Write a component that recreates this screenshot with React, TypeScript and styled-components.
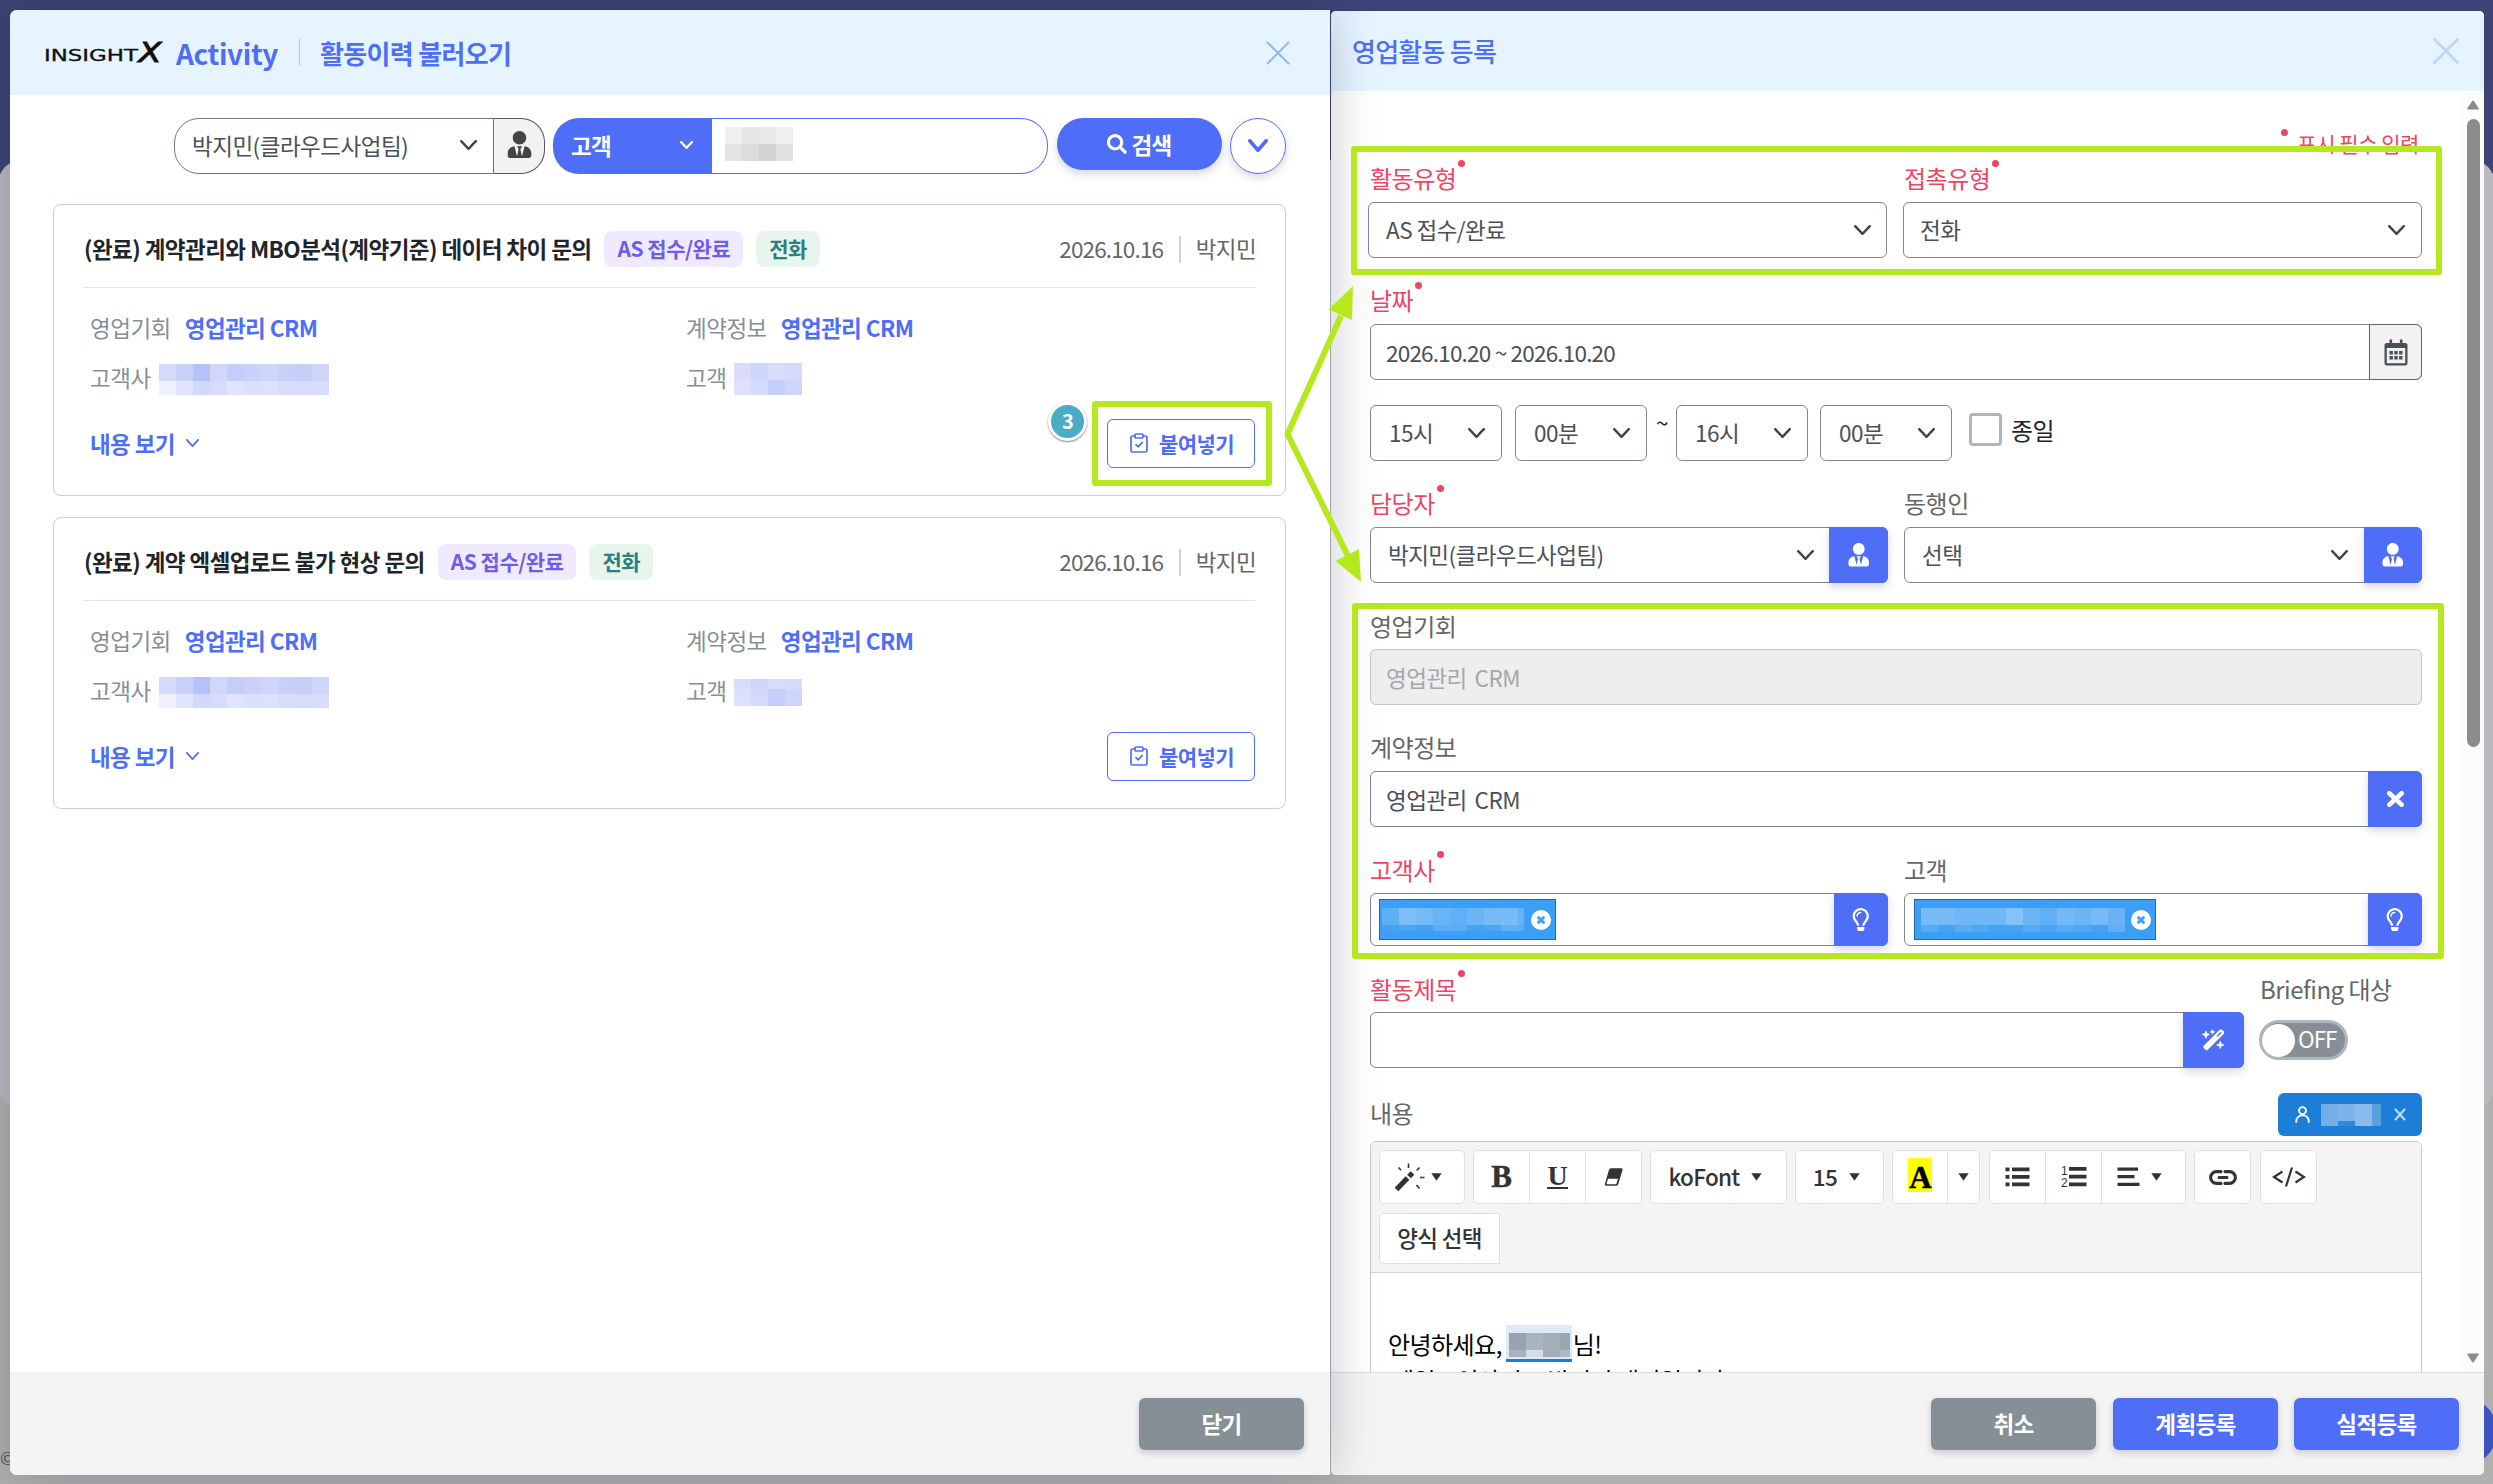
import React from "react";
import styled, { createGlobalStyle, css } from "styled-components";
import { FaSearch, FaUserTie, FaRegLightbulb } from "react-icons/fa";
import { FaWandMagicSparkles } from "react-icons/fa6";

const BLUE = "#4f6ef7";
const LIME = "#b5e91e";
const LINE = "#7f8893";
const RED = "#ef4563";

const GlobalStyle = createGlobalStyle`
  * { box-sizing: border-box; }
  body {
    margin: 0;
    font-family: "Noto Sans CJK KR", "Noto Sans", sans-serif;
    font-size: 22.5px;
    letter-spacing: -0.6px;
    color: #212529;
  }
`;

/* ---------- page and windows ---------- */

const Page = styled.div`
  position: relative;
  width: 2493px;
  height: 1484px;
  overflow: hidden;
  background: #adadaf;
`;

const Backdrop = styled.div`
  position: absolute;
  inset: 0;
  background: linear-gradient(#3d4475 0 200px, #b0b0b0 200px);
`;

const BackdropSheet = styled.div`
  position: absolute;
  left: -2px;
  right: -2px;
  top: 160px;
  height: 950px;
  border-radius: 24px;
  background: #bab9be;
`;

const Copyright = styled.div`
  position: absolute;
  left: 0;
  top: 1444px;
  font-size: 18px;
  line-height: 26px;
  color: #55555a;
`;

const FloatingButton = styled.div`
  position: absolute;
  left: 2428px;
  top: 1397px;
  width: 69px;
  height: 69px;
  border-radius: 50%;
  background: #3c52c0;
`;

const Windows = styled.main`
  position: relative;
  display: flex;
  align-items: stretch;
  gap: 1px;
  height: 100%;
  padding: 10px 9px 9px 10px;
`;

const Window = styled.section<{ $front?: boolean }>`
  display: flex;
  flex-direction: column;
  background: #fff;
  overflow: hidden;
  ${(p) =>
    p.$front
      ? css`
          position: relative;
          z-index: 1;
          width: 1320px;
          border-radius: 7px 0 0 7px;
          box-shadow: 0 0 48px rgba(20, 25, 60, 0.24);
        `
      : css`
          flex: 1;
          margin-top: 1px;
          border-radius: 5px;
        `}
`;

const WindowHeader = styled.header<{ $h: number; $pad: string }>`
  flex: none;
  display: flex;
  align-items: center;
  height: ${(p) => p.$h}px;
  padding: ${(p) => p.$pad};
  background: #e5f4ff;
`;

const WindowTitle = styled.h1<{ $strong?: boolean }>`
  margin: 0;
  font-size: 26px;
  font-weight: ${(p) => (p.$strong ? 700 : 500)};
  line-height: 40px;
  letter-spacing: ${(p) => (p.$strong ? -0.65 : -0.75)}px;
  color: ${BLUE};
`;

const Product = styled.span`
  margin: 0 21px 0 13px;
  font-size: 28px;
  font-weight: 700;
  line-height: 40px;
  letter-spacing: -0.4px;
  color: ${BLUE};
`;

const HeaderRule = styled.span`
  width: 1px;
  height: 27px;
  margin-right: 20px;
  background: #a5cdf0;
`;

const CloseButton = styled.span`
  display: flex;
  margin-left: auto;
`;

const WindowFooter = styled.footer<{ $line?: boolean }>`
  flex: none;
  display: flex;
  justify-content: flex-end;
  align-items: center;
  gap: 16px;
  height: 103px;
  padding: 0 25px 1px 0;
  background: #f4f4f4;
  border-top: 1px solid ${(p) => (p.$line ? "#dcdcdc" : "#f4f4f4")};
`;

const FooterButton = styled.button<{ $muted?: boolean }>`
  width: 165px;
  height: 52px;
  margin-right: ${(p) => (p.$muted ? 1 : 0)}px;
  padding: 0;
  border: 0;
  border-radius: 6px;
  background: ${(p) => (p.$muted ? "#868e96" : BLUE)};
  box-shadow: 0 3px 7px rgba(50, 50, 93, 0.22);
  color: #fff;
  font: 700 22.5px / 49px "Noto Sans CJK KR", sans-serif;
  letter-spacing: -0.6px;
`;

/* ---------- search row ---------- */

const SearchRow = styled.div`
  display: flex;
  justify-content: flex-end;
  align-items: flex-start;
  height: 56px;
  margin: 23px 44px 30px 0;
`;

const OwnerPill = styled.div`
  display: flex;
  align-items: center;
  justify-content: space-between;
  width: 320px;
  height: 56px;
  padding: 0 16px 2px 17px;
  border: 1px solid #6f7780;
  border-radius: 25px 0 0 25px;
  color: #495057;
  line-height: 50px;
  letter-spacing: -0.5px;
`;

const OwnerIcon = styled.div`
  display: flex;
  align-items: center;
  justify-content: center;
  width: 51px;
  height: 56px;
  margin: 0 8px 0 0;
  padding-bottom: 4px;
  border: 1px solid #555;
  border-left: 0;
  border-radius: 0 24px 24px 0;
  background: #f2f2f2;
  color: #444;
  font-size: 27px;
`;

const FieldPick = styled.div`
  display: flex;
  align-items: center;
  justify-content: space-between;
  width: 159px;
  height: 56px;
  padding: 0 19px 2px 18px;
  border-radius: 26px 0 0 26px;
  background: ${BLUE};
  color: #fff;
  font-weight: 700;
  line-height: 50px;
`;

const KeywordBox = styled.div`
  display: flex;
  align-items: center;
  width: 336px;
  height: 56px;
  margin-right: 9px;
  padding: 0 0 4px 13px;
  border: 1.5px solid ${BLUE};
  border-left: 0;
  border-radius: 0 27px 27px 0;
`;

const SearchButton = styled.div`
  display: flex;
  align-items: center;
  justify-content: center;
  gap: 4px;
  width: 165px;
  height: 52px;
  margin-right: 8px;
  border-radius: 26px;
  background: ${BLUE};
  box-shadow: 0 4px 8px rgba(50, 50, 93, 0.2);
  color: #fff;
  font-size: 22.5px;
  font-weight: 700;
  line-height: 49px;
`;

const MoreButton = styled.div`
  display: flex;
  align-items: center;
  justify-content: center;
  width: 56px;
  height: 56px;
  padding-bottom: 1px;
  border: 1.5px solid ${BLUE};
  border-radius: 50%;
  box-shadow: 0 4px 8px rgba(50, 50, 93, 0.18);
`;

/* ---------- history cards ---------- */

const CardList = styled.div`
  flex: 1;
  display: flex;
  flex-direction: column;
  gap: 21px;
  padding: 0 44px 0 43px;
`;

const Card = styled.article`
  height: 292px;
  padding: 0 29px;
  border: 1px solid #c3d0e0;
  border-radius: 8px;
`;

const CardHead = styled.div`
  display: flex;
  align-items: center;
  height: 83px;
  padding: 5px 0 0 1px;
  border-bottom: 1px solid #dde3ea;
`;

const CardTitle = styled.h2`
  margin: 0 13px 1px 0;
  font-size: 22.5px;
  font-weight: 700;
  line-height: 34px;
  letter-spacing: -0.56px;
  color: #212529;
`;

const Tag = styled.span<{ $green?: boolean }>`
  height: 36px;
  margin-right: 13px;
  padding: 0 13px;
  border-radius: 8px;
  background: ${(p) => (p.$green ? "#e8f5ec" : "#efeafd")};
  color: ${(p) => (p.$green ? "#2b7f83" : "#6f5ce8")};
  font-size: 21px;
  font-weight: 700;
  line-height: 35px;
  letter-spacing: -0.5px;
`;

const CardMeta = styled.div`
  display: flex;
  align-items: center;
  margin-left: auto;
  line-height: 30px;
  padding-bottom: 1px;
  color: #666;
`;

const Digits = styled.span`
  letter-spacing: -0.85px;
`;

const MetaRule = styled.span`
  width: 1.5px;
  height: 27px;
  margin: 3px 15px 0 16px;
  background: #cdd3dc;
`;

const Facts = styled.div`
  display: grid;
  grid-template-columns: 596px 1fr;
  grid-auto-rows: 50px;
  align-items: center;
  padding: 16px 0 0 7px;
`;

const Fact = styled.div<{ $gap: number }>`
  display: flex;
  align-items: center;
  gap: ${(p) => p.$gap}px;
  line-height: 44px;
  color: #868e96;
`;

const FactLabel = styled.span`
  padding-bottom: 4px;
  letter-spacing: -0.5px;
`;

const FactLink = styled.b`
  padding-bottom: 4px;
  font-weight: 700;
  letter-spacing: -0.6px;
  color: ${BLUE};
`;

const CardActions = styled.div`
  display: flex;
  align-items: center;
  justify-content: space-between;
  height: 49px;
  margin: 15px 1px 0 7px;
`;

const ShowContent = styled.span`
  display: flex;
  align-items: center;
  gap: 11px;
  padding-bottom: 1px;
  font-weight: 700;
  color: ${BLUE};
`;

const PasteButton = styled.span`
  display: flex;
  align-items: center;
  gap: 11px;
  width: 148px;
  height: 49px;
  padding: 0 0 1px 22px;
  border: 1.5px solid ${BLUE};
  border-radius: 6px;
  font-size: 21px;
  font-weight: 700;
  color: ${BLUE};
`;

/* ---------- mosaics over private values ---------- */

const MosaicGrid = styled.span<{ $cols: string; $rows: string }>`
  display: inline-grid;
  flex: none;
  grid-template-columns: ${(p) => p.$cols};
  grid-template-rows: ${(p) => p.$rows};
`;

const MosaicCell = styled.i<{ $c: string }>`
  background: ${(p) => p.$c};
`;

function Mosaic({ cols, rows, cells }: { cols: string; rows: string; cells: string }) {
  return (
    <MosaicGrid $cols={cols} $rows={rows}>
      {cells.split(" ").map((c, i) => (
        <MosaicCell key={i} $c={"#" + c} />
      ))}
    </MosaicGrid>
  );
}

/* ---------- form ---------- */

const FormScroll = styled.div`
  flex: 1;
  display: flex;
  min-height: 0;
`;

const FormColumn = styled.div`
  flex: 1;
  padding: 0 40px 0 39px;
  overflow: hidden;
`;

const ScrollTrack = styled.div`
  display: flex;
  flex-direction: column;
  align-items: center;
  width: 22px;
  padding: 9px 0 9px;
  background: #fcfcfc;
`;

const ScrollThumb = styled.div`
  width: 13px;
  height: 628px;
  margin: 9px 0 auto;
  border-radius: 7px;
  background: #8b8b8b;
`;

const RequiredNote = styled.p`
  display: flex;
  justify-content: flex-end;
  height: 71px;
  margin: 0;
  padding: 36px 3px 0 0;
  font-size: 21px;
  line-height: 32px;
  letter-spacing: -0.45px;
  color: ${RED};
`;

const Dot = styled.i<{ $gap?: number }>`
  width: 7px;
  height: 7px;
  margin: 2px ${(p) => p.$gap ?? 0}px 0 2px;
  border-radius: 50%;
  background: ${RED};
`;

const FormRow = styled.div<{ $wide?: boolean; $top?: number }>`
  display: flex;
  gap: 16px;
  margin-top: ${(p) => p.$top ?? 26}px;
  margin-left: ${(p) => (p.$wide ? -2 : 0)}px;
`;

const FieldBox = styled.div<{ $w?: number }>`
  ${(p) => (p.$w ? `width: ${p.$w}px;` : "flex: 1;")}
`;

const FieldLabel = styled.div<{ $required?: boolean; $pad?: number; $low?: boolean }>`
  display: flex;
  height: 40px;
  padding-left: ${(p) => p.$pad ?? 0}px;
  font-size: 24px;
  line-height: ${(p) => (p.$low ? 33 : 32)}px;
  letter-spacing: -0.5px;
  color: ${(p) => (p.$required ? RED : "#666")};
`;

const LabelDot = styled(Dot)`
  margin: -2px 0 0 2px;
`;

const Control = styled.div<{ $h?: number; $disabled?: boolean }>`
  display: flex;
  height: ${(p) => p.$h ?? 56}px;
  border: 1px solid ${(p) => (p.$disabled ? "#c3c6ca" : LINE)};
  border-radius: 6px;
  background: ${(p) => (p.$disabled ? "#eee" : "transparent")};
  color: ${(p) => (p.$disabled ? "#a3a6aa" : "#495057")};
`;

const ControlValue = styled.span<{ $pad?: number; $ws?: number; $tight?: boolean; $low?: boolean }>`
  flex: 1;
  padding-left: ${(p) => p.$pad ?? 15}px;
  line-height: ${(p) => (p.$low ? 54 : 52)}px;
  letter-spacing: ${(p) => (p.$tight ? -0.8 : -0.55)}px;
  word-spacing: ${(p) => p.$ws ?? 0}px;
  white-space: nowrap;
`;

const ChevronSlot = styled.span<{ $end?: number }>`
  display: flex;
  align-items: center;
  padding-right: ${(p) => p.$end ?? 16}px;
`;

const SideButton = styled.span<{ $w: number; $gray?: boolean }>`
  flex: none;
  display: flex;
  align-items: center;
  justify-content: center;
  width: ${(p) => p.$w}px;
  margin: -1px -1px -1px 0;
  border-radius: 0 6px 6px 0;
  font-size: 23.5px;
  ${(p) =>
    p.$gray
      ? css`
          border: 1px solid #666;
          background: #f2f2f2;
          color: #495057;
        `
      : css`
          background: ${BLUE};
          box-shadow: 0 4px 8px rgba(50, 50, 93, 0.18);
          color: #fff;
        `}
`;

const TimeRow = styled.div`
  display: flex;
  margin-top: 25px;
  height: 56px;
`;

const TimeSelect = styled(Control)<{ $after: number }>`
  width: 132px;
  margin-right: ${(p) => p.$after}px;
`;

const Tilde = styled.span`
  width: 20px;
  margin-left: -20px;
  line-height: 34px;
`;

const Checkbox = styled.span`
  width: 33px;
  height: 33px;
  margin: 8px 9px 0 0;
  border: 3px solid #adb5bd;
  border-radius: 4px;
`;

const CheckboxText = styled.span`
  font-size: 24px;
  line-height: 50px;
`;

const Chip = styled.span<{ $w: number; $pad: number; $left?: number }>`
  display: flex;
  align-items: center;
  justify-content: space-between;
  width: ${(p) => p.$w}px;
  height: 41px;
  margin: 5px auto 0 ${(p) => p.$left ?? 8}px;
  padding: 0 4px 0 ${(p) => p.$pad}px;
  border: 1px solid #2568a5;
  background: #3b9ff5;
`;

const Switch = styled.div`
  display: flex;
  align-items: center;
  width: 89px;
  height: 40px;
  margin: 8px 0 0 -1px;
  border: 3px solid #adb5bd;
  border-radius: 20px;
  background: #868e96;
  color: #fff;
  font-size: 22.5px;
  letter-spacing: -1px;
`;

const SwitchText = styled.span`
  padding-bottom: 4px;
  line-height: 30px;
`;

const Knob = styled.span`
  width: 33px;
  height: 33px;
  margin-right: 3px;
  border-radius: 50%;
  background: #fff;
`;

const ContentHead = styled.div`
  display: flex;
  justify-content: space-between;
  margin: 25px 0 5px;
  height: 43px;
  line-height: 40px;
  font-size: 24px;
  color: #666;
`;

const PersonChip = styled.span`
  display: flex;
  align-items: center;
  width: 144px;
  padding-left: 17px;
  border-radius: 6px;
  background: #1c7ed6;
`;

const ChipGap = styled.span<{ $w: number }>`
  width: ${(p) => p.$w}px;
`;

/* ---------- editor ---------- */

const Editor = styled.div`
  height: 300px;
  border: 1px solid #c6c8ca;
  border-radius: 6px 6px 0 0;
`;

const Toolbar = styled.div`
  display: flex;
  flex-wrap: wrap;
  align-content: flex-start;
  gap: 9px 8px;
  height: 131px;
  padding: 8px;
  border-radius: 5px 5px 0 0;
  background: #f4f4f4;
  border-bottom: 1px solid #d4d6d8;
`;

const ToolGroup = styled.div<{ $nudge?: boolean }>`
  display: flex;
  height: 54px;
  margin-left: ${(p) => (p.$nudge ? 1 : 0)}px;
  border: 1px solid #dae0e5;
  border-radius: 5px;
  background: #fff;
  overflow: hidden;
`;

const Tool = styled.span<{ $w: number; $gap?: number; $end?: number }>`
  display: flex;
  align-items: center;
  justify-content: center;
  gap: ${(p) => p.$gap ?? 6}px;
  width: ${(p) => p.$w}px;
  padding-right: ${(p) => p.$end ?? 0}px;
  color: #333;
  font-weight: 500;
  letter-spacing: -0.7px;
  & + & {
    border-left: 1px solid #dae0e5;
  }
`;

const ToolText = styled.span`
  padding-bottom: 3px;
`;

const SerifGlyph = styled.span<{ $under?: boolean; $mark?: boolean }>`
  font-family: "Liberation Serif", serif;
  font-weight: 700;
  letter-spacing: 0;
  font-size: 31px;
  line-height: ${(p) => (p.$mark ? 34 : 30)}px;
  -webkit-text-stroke: 0.5px currentColor;
  ${(p) =>
    p.$under &&
    css`
      font-size: 28px;
      line-height: 22px;
      border-bottom: 2px solid #333;
      -webkit-text-stroke: 0;
    `}
  ${(p) =>
    p.$mark &&
    css`
      margin-top: -5px;
      padding: 3px 0 0 1px;
      height: 34px;
      background: #ff0;
      color: #000;
    `}
`;

const FormPick = styled(ToolGroup)`
  height: 51px;
  border-radius: 5px 0 0 5px;
`;

const EditorText = styled.div`
  padding: 52px 17px 0;
  font-size: 24px;
  line-height: 37px;
  letter-spacing: -0.55px;
  color: #000;
  white-space: nowrap;
`;

const EditorLine = styled.div<{ $inset?: number }>`
  display: flex;
  padding-left: ${(p) => p.$inset ?? 0}px;
  & + & {
    margin-top: -1px;
  }
`;

const Mention = styled.span`
  display: flex;
  width: 66px;
  height: 37px;
  margin: 0 1px 0 4px;
  padding: 8px 0 0 3px;
  background: #dcebf7;
  border-bottom: 3px solid #1c7ed6;
`;

/* ---------- annotations drawn over the screen ---------- */

const Highlight = styled.div<{ $x: number; $y: number; $w: number; $h: number }>`
  position: absolute;
  z-index: 3;
  left: ${(p) => p.$x}px;
  top: ${(p) => p.$y}px;
  width: ${(p) => p.$w}px;
  height: ${(p) => p.$h}px;
  border: 6px solid ${LIME};
  border-radius: 3px;
`;

const StepBadge = styled.div`
  position: absolute;
  z-index: 3;
  left: 1048px;
  top: 402px;
  width: 39px;
  height: 39px;
  border: 3px solid #fff;
  border-radius: 50%;
  background: #4bacc6;
  box-shadow: 0 1px 2px rgba(0, 0, 0, 0.5);
  color: #fff;
  font-size: 20px;
  font-weight: 700;
  line-height: 31px;
  text-align: center;
`;

const ArrowLayer = styled.svg`
  position: absolute;
  z-index: 3;
  left: 1270px;
  top: 270px;
`;

/* ---------- drawn icons ---------- */

function Chevron({ w = 17, h = 10, stroke = 2.4, color = "#444" }: { w?: number; h?: number; stroke?: number; color?: string }) {
  const p = stroke / 2;
  return (
    <svg width={w} height={h} viewBox={`0 0 ${w} ${h}`} fill="none" stroke={color} strokeWidth={stroke} strokeLinecap="round" strokeLinejoin="round">
      <path d={`M${p} ${p} L${w / 2} ${h - p} L${w - p} ${p}`} />
    </svg>
  );
}

function Cross({ w, h, stroke, color }: { w: number; h: number; stroke: number; color: string }) {
  const p = Math.max(1.5, stroke / 2);
  return (
    <svg width={w} height={h} viewBox={`0 0 ${w} ${h}`} stroke={color} strokeWidth={stroke} strokeLinecap="round">
      <path d={`M${p} ${p} L${w - p} ${h - p} M${w - p} ${p} L${p} ${h - p}`} />
    </svg>
  );
}

const Caret = () => (
  <svg width="11" height="8" viewBox="0 0 11 8">
    <path d="M0.3 0.3h10.4L5.5 7.8z" fill="#333" />
  </svg>
);

const LogoBox = styled.svg`
  margin-left: -1px;
  margin-right: 1px;
  overflow: visible;
`;

const Logo = () => (
  <LogoBox width="118" height="30" viewBox="0 0 118 30">
    <text x="0" y="22.500" fontFamily="DejaVu Sans" fontSize="15" fill="#111" stroke="#111" strokeWidth="0.300" textLength="94" lengthAdjust="spacingAndGlyphs" letterSpacing="0">
      INSIGHT
    </text>
    <text x="94.500" y="23.500" fontFamily="DejaVu Sans" fontStyle="italic" fontSize="27" fill="#111" stroke="#111" strokeWidth="0.900" textLength="23" lengthAdjust="spacingAndGlyphs" letterSpacing="0">
      X
    </text>
  </LogoBox>
);

const ClipboardIcon = () => (
  <svg width="18" height="20" viewBox="0 0 18 20" fill="none" stroke={BLUE} strokeWidth="1.7" strokeLinejoin="round" strokeLinecap="round">
    <path d="M5 3H2.6A1.6 1.6 0 0 0 1 4.6v12.8A1.6 1.6 0 0 0 2.6 19h12.8a1.6 1.6 0 0 0 1.6-1.6V4.6A1.6 1.6 0 0 0 15.4 3H13" />
    <rect x="5" y="1" width="8" height="4" rx="1" />
    <path d="M6 11.6l2.3 2.2 4-4.4" />
  </svg>
);

const CalendarIcon = () => (
  <svg width="24" height="27" viewBox="0 0 24 27">
    <path d="M5.5 0.5h2.6V4H15.9V0.5h2.6V4h2.8A2.2 2.2 0 0 1 23.5 6.200V24.300A2.200 2.200 0 0 1 21.300 26.500H2.700A2.200 2.200 0 0 1 0.500 24.300V6.200A2.200 2.200 0 0 1 2.700 4H5.500zM2.800 9V24.200H21.200V9z" fill="#495057" fillRule="evenodd" />
    <path d="M5.500 12h3.400v3.400H5.500zM10.300 12h3.400v3.400h-3.400zM15.100 12h3.400v3.400h-3.400zM5.500 17h3.400v3.400H5.500zM10.300 17h3.400v3.400h-3.400zM15.100 17h3.400v3.400h-3.400z" fill="#495057" />
  </svg>
);

const RemoveIcon = () => (
  <svg width="20" height="20" viewBox="0 0 20 20">
    <circle cx="10" cy="10" r="10" fill="#fff" />
    <path d="M6.700 6.700l6.600 6.600M13.300 6.700l-6.600 6.600" stroke="#3b9ff5" strokeWidth="2.800" />
  </svg>
);

const PersonOutline = () => (
  <svg width="15" height="17" viewBox="0 0 15 17" fill="none" stroke="#fff" strokeWidth="1.900" strokeLinecap="round">
    <circle cx="7.500" cy="4.600" r="3.500" />
    <path d="M1.200 16c0-4.200 2.600-6.600 6.300-6.600s6.300 2.400 6.300 6.600" />
  </svg>
);

const WandIcon = () => (
  <svg width="31" height="29" viewBox="0 0 31 29">
    <g stroke="#333" fill="none">
      <path d="M2.500 26.500L13.500 15" strokeWidth="5.200" />
      <path d="M15 13.500L18.500 10" strokeWidth="5.200" />
      <path d="M14.500 0.500v4.500M4.500 4.500l2.600 2.800M25.500 4.500l-2.800 3M26 14.500h4.500M22.500 22l3 3.500" strokeWidth="1.600" />
    </g>
  </svg>
);

const EraserIcon = () => (
  <svg width="20" height="20" viewBox="0 0 20 20">
    <path d="M6.800 1.200h10.400a1.300 1.300 0 0 1 1.300 1.700l-4.300 14.400a2.200 2.200 0 0 1-2 1.500H2.200a1.300 1.300 0 0 1-1.300-1.700L5 2.700a2.200 2.200 0 0 1 1.800-1.500z" fill="#333" />
    <path d="M4 11.800h10l-1.600 5a.6.600 0 0 1-.6.400H3.100a.5.500 0 0 1-.5-.7z" fill="#fff" />
  </svg>
);

const BulletIcon = () => (
  <svg width="25" height="20" viewBox="0 0 25 20" fill="#333">
    <path d="M0.500 0.500h4v3.800h-4zM0.500 8h4v3.800h-4zM0.500 15.500h4v3.800h-4zM7 0.500h17.500v3.800H7zM7 8h17.500v3.800H7zM7 15.500h17.500v3.800H7z" />
  </svg>
);

const NumberIcon = () => (
  <svg width="26" height="22" viewBox="0 0 26 22" fill="#333">
    <text x="0" y="9" fontFamily="Liberation Sans" fontSize="12" letterSpacing="0">1</text>
    <text x="0" y="21" fontFamily="Liberation Sans" fontSize="12" letterSpacing="0">2</text>
    <path d="M8 1h17.500v3.800H8zM8 8.700h17.500v3.800H8zM8 16.400h17.500v3.800H8z" />
  </svg>
);

const AlignIcon = () => (
  <svg width="23" height="20" viewBox="0 0 23 20" fill="#333">
    <path d="M0.500 0.500h20.500v3.300h-20.500zM0.500 8h17v3.300h-17zM0.500 15.800h22v3.300h-22z" />
  </svg>
);

const LinkIcon = () => (
  <svg width="28" height="15" viewBox="0 0 28 15" fill="none" stroke="#333" strokeWidth="3.100" strokeLinecap="round">
    <path d="M12 1.600H7.500A5.900 5.900 0 0 0 7.500 13.400h4.500M16 1.600h4.500a5.900 5.900 0 0 1 0 11.800h-4.500M10 7.500h8" />
  </svg>
);

const CodeIcon = () => (
  <svg width="34" height="20" viewBox="0 0 34 20" fill="none" stroke="#333" strokeWidth="2.200">
    <path d="M10.500 4.500L2 10l8.500 5.500M23.500 4.500L32 10l-8.500 5.500M20 0.500L14 19.500" />
  </svg>
);

const ScrollArrow = ({ down }: { down?: boolean }) => (
  <svg width="12" height="10" viewBox="0 0 12 10">
    <path d={down ? "M1 0.500h10a.8.800 0 0 1 .6 1.200L6.500 9.500h-1L.4 1.700A.8.800 0 0 1 1 .500z" : "M1 9.500h10a.8.800 0 0 0 .6-1.200L6.500 .500h-1L.4 8.300A.8.800 0 0 0 1 9.500z"} fill="#8b8b8b" />
  </svg>
);

/* ---------- composed pieces ---------- */

const COMPANY_MOSAIC =
  "d3dafb c8d0fa b6c1f8 d0d7fb c5cefa cad2fb ced6fb c8d0fa c5cdf9 d0d6fb eef0fe e0e4fd d3d9fc d7dcfc e0e4fd dbe0fc dde1fc d9ddfc d8dcfc d9ddfc";
const PERSON_MOSAIC = "d9ddfc cdd5fb d9ddfc d5dcfb dde1fd d3dafb c6cffa cdd5fb";

function HistoryCard({ title, personRows }: { title: string; personRows: string }) {
  return (
    <Card>
      <CardHead>
        <CardTitle>{title}</CardTitle>
        <Tag>AS 접수/완료</Tag>
        <Tag $green>전화</Tag>
        <CardMeta>
          <Digits>2026.10.16</Digits>
          <MetaRule />
          박지민
        </CardMeta>
      </CardHead>
      <Facts>
        <Fact $gap={14}>
          <FactLabel>영업기회</FactLabel>
          <FactLink>영업관리 CRM</FactLink>
        </Fact>
        <Fact $gap={14}>
          <FactLabel>계약정보</FactLabel>
          <FactLink>영업관리 CRM</FactLink>
        </Fact>
        <Fact $gap={8}>
          <FactLabel>고객사</FactLabel>
          <Mosaic cols="repeat(10, 17px)" rows="17px 14px" cells={COMPANY_MOSAIC} />
        </Fact>
        <Fact $gap={8}>
          <FactLabel>고객</FactLabel>
          <Mosaic cols="repeat(4, 17px)" rows={personRows} cells={PERSON_MOSAIC} />
        </Fact>
      </Facts>
      <CardActions>
        <ShowContent>
          내용 보기
          <Chevron w={13} h={8} stroke={1.8} color={BLUE} />
        </ShowContent>
        <PasteButton>
          <ClipboardIcon />
          붙여넣기
        </PasteButton>
      </CardActions>
    </Card>
  );
}

function Label({ text, required, pad, low }: { text: string; required?: boolean; pad?: number; low?: boolean }) {
  return (
    <FieldLabel $required={required} $pad={pad} $low={low}>
      {text}
      {required && <LabelDot />}
    </FieldLabel>
  );
}

function Select({ value, pad, end, children }: { value: string; pad?: number; end?: number; children?: React.ReactNode }) {
  return (
    <Control>
      <ControlValue $pad={pad ?? 16}>{value}</ControlValue>
      <ChevronSlot $end={end}>
        <Chevron />
      </ChevronSlot>
      {children}
    </Control>
  );
}

function Time({ value, after }: { value: string; after: number }) {
  return (
    <TimeSelect $after={after}>
      <ControlValue $pad={18}>{value}</ControlValue>
      <ChevronSlot>
        <Chevron />
      </ChevronSlot>
    </TimeSelect>
  );
}

export default function App() {
  return (
    <Page>
      <GlobalStyle />
      <Backdrop />
      <BackdropSheet />
      <Copyright>©</Copyright>
      <FloatingButton />
      <Windows>
        <Window $front>
          <WindowHeader $h={85} $pad="0 40px 0 35px">
            <Logo />
            <Product>Activity</Product>
            <HeaderRule />
            <WindowTitle $strong>활동이력 불러오기</WindowTitle>
            <CloseButton>
              <Cross w={24} h={24} stroke={2} color="#8fbbea" />
            </CloseButton>
          </WindowHeader>
          <SearchRow>
            <OwnerPill>
              박지민(클라우드사업팀)
              <Chevron />
            </OwnerPill>
            <OwnerIcon>
              <FaUserTie />
            </OwnerIcon>
            <FieldPick>
              고객
              <Chevron w={13} h={8} color="#fff" />
            </FieldPick>
            <KeywordBox>
              <Mosaic cols="repeat(4, 17px)" rows="17px 17px" cells="f0f0f0 e5e5e5 e9e9e9 efefef e3e3e3 dbdddd d3d3d3 e0e0e0" />
            </KeywordBox>
            <SearchButton>
              <FaSearch size={20} />
              검색
            </SearchButton>
            <MoreButton>
              <Chevron w={20} h={13} stroke={3.6} color={BLUE} />
            </MoreButton>
          </SearchRow>
          <CardList>
            <HistoryCard title="(완료) 계약관리와 MBO분석(계약기준) 데이터 차이 문의" personRows="17px 15px" />
            <HistoryCard title="(완료) 계약 엑셀업로드 불가 현상 문의" personRows="10px 17px" />
          </CardList>
          <WindowFooter>
            <FooterButton $muted>닫기</FooterButton>
          </WindowFooter>
        </Window>

        <Window>
          <WindowHeader $h={80} $pad="0 25px 0 21px">
            <WindowTitle>영업활동 등록</WindowTitle>
            <CloseButton>
              <Cross w={26} h={26} stroke={3} color="#c5d3f6" />
            </CloseButton>
          </WindowHeader>
          <FormScroll>
            <FormColumn>
              <RequiredNote>
                <Dot $gap={9} />
                표시 필수 입력
              </RequiredNote>
              <FormRow $wide $top={0}>
                <FieldBox>
                  <Label text="활동유형" required pad={2} />
                  <Select value="AS 접수/완료" pad={17} end={15} />
                </FieldBox>
                <FieldBox>
                  <Label text="접촉유형" required pad={1} />
                  <Select value="전화" />
                </FieldBox>
              </FormRow>
              <FormRow>
                <FieldBox>
                  <Label text="날짜" required />
                  <Control>
                    <ControlValue $tight $low>2026.10.20 ~ 2026.10.20</ControlValue>
                    <SideButton $w={53} $gray>
                      <CalendarIcon />
                    </SideButton>
                  </Control>
                </FieldBox>
              </FormRow>
              <TimeRow>
                <Time value="15시" after={13} />
                <Time value="00분" after={29} />
                <Tilde>~</Tilde>
                <Time value="16시" after={12} />
                <Time value="00분" after={17} />
                <Checkbox />
                <CheckboxText>종일</CheckboxText>
              </TimeRow>
              <FormRow>
                <FieldBox>
                  <Label text="담당자" required />
                  <Select value="박지민(클라우드사업팀)" pad={17} end={15}>
                    <SideButton $w={59}>
                      <FaUserTie />
                    </SideButton>
                  </Select>
                </FieldBox>
                <FieldBox>
                  <Label text="동행인" />
                  <Select value="선택" pad={17}>
                    <SideButton $w={58}>
                      <FaUserTie />
                    </SideButton>
                  </Select>
                </FieldBox>
              </FormRow>
              <FormRow>
                <FieldBox>
                  <Label text="영업기회" low />
                  <Control $disabled>
                    <ControlValue $ws={3.5} $low>영업관리 CRM</ControlValue>
                  </Control>
                </FieldBox>
              </FormRow>
              <FormRow>
                <FieldBox>
                  <Label text="계약정보" />
                  <Control>
                    <ControlValue $ws={3.5} $low>영업관리 CRM</ControlValue>
                    <SideButton $w={54}>
                      <Cross w={17} h={16} stroke={4.6} color="#fff" />
                    </SideButton>
                  </Control>
                </FieldBox>
              </FormRow>
              <FormRow>
                <FieldBox>
                  <Label text="고객사" required low />
                  <Control $h={53}>
                    <Chip $w={177} $pad={2}>
                      <Mosaic
                        cols="repeat(8, 17px) 6px"
                        rows="17px 6px"
                        cells="5cb0f6 7dbef8 74baf7 69b4f7 5fb0f6 69b5f7 76baf8 78bbf8 66b2f6 43a2f3 4aa5f4 43a2f3 5aaef6 5aaef6 45a3f4 4aa6f4 5fb0f6 5aaef6"
                      />
                      <RemoveIcon />
                    </Chip>
                    <SideButton $w={54}>
                      <FaRegLightbulb />
                    </SideButton>
                  </Control>
                </FieldBox>
                <FieldBox>
                  <Label text="고객" low />
                  <Control $h={53}>
                    <Chip $w={242} $pad={6} $left={9}>
                      <Mosaic
                        cols="repeat(12, 17px)"
                        rows="17px 7px"
                        cells="78bbf8 78bbf8 6fb7f7 6fb7f7 6fb7f7 85c2f9 6bb5f7 61b0f6 74b9f7 6bb5f7 78bbf8 68b3f6 55abf5 45a3f4 57acf5 50a8f5 45a3f4 45a3f4 55abf5 4aa5f4 55abf5 50a8f5 45a3f4 61b0f6"
                      />
                      <RemoveIcon />
                    </Chip>
                    <SideButton $w={54}>
                      <FaRegLightbulb />
                    </SideButton>
                  </Control>
                </FieldBox>
              </FormRow>
              <FormRow>
                <FieldBox>
                  <Label text="활동제목" required low />
                  <Control>
                    <ControlValue />
                    <SideButton $w={61}>
                      <FaWandMagicSparkles />
                    </SideButton>
                  </Control>
                </FieldBox>
                <FieldBox $w={162}>
                  <Label text="Briefing 대상" low />
                  <Switch>
                    <Knob />
                    <SwitchText>OFF</SwitchText>
                  </Switch>
                </FieldBox>
              </FormRow>
              <ContentHead>
                내용
                <PersonChip>
                  <PersonOutline />
                  <ChipGap $w={11} />
                  <Mosaic cols="17px 17px 17px 9px" rows="17px 5px" cells="74aee6 7cb3e8 8abbea 5a9fe0 74aee6 3289da 8abbea 5a9fe0" />
                  <ChipGap $w={13} />
                  <Cross w={12} h={13} stroke={2} color="#c7def5" />
                </PersonChip>
              </ContentHead>
              <Editor>
                <Toolbar>
                  <ToolGroup>
                    <Tool $w={84} $end={9}>
                      <WandIcon />
                      <Caret />
                    </Tool>
                  </ToolGroup>
                  <ToolGroup>
                    <Tool $w={55}>
                      <SerifGlyph>B</SerifGlyph>
                    </Tool>
                    <Tool $w={56}>
                      <SerifGlyph $under>U</SerifGlyph>
                    </Tool>
                    <Tool $w={56}>
                      <EraserIcon />
                    </Tool>
                  </ToolGroup>
                  <ToolGroup>
                    <Tool $w={135} $gap={11} $end={7}>
                      <ToolText>koFont</ToolText>
                      <Caret />
                    </Tool>
                  </ToolGroup>
                  <ToolGroup>
                    <Tool $w={87} $gap={12} $end={6}>
                      <ToolText>15</ToolText>
                      <Caret />
                    </Tool>
                  </ToolGroup>
                  <ToolGroup>
                    <Tool $w={54}>
                      <SerifGlyph $mark>A</SerifGlyph>
                    </Tool>
                    <Tool $w={32}>
                      <Caret />
                    </Tool>
                  </ToolGroup>
                  <ToolGroup $nudge>
                    <Tool $w={55}>
                      <BulletIcon />
                    </Tool>
                    <Tool $w={56}>
                      <NumberIcon />
                    </Tool>
                    <Tool $w={84} $gap={11} $end={9}>
                      <AlignIcon />
                      <Caret />
                    </Tool>
                  </ToolGroup>
                  <ToolGroup>
                    <Tool $w={55}>
                      <LinkIcon />
                    </Tool>
                  </ToolGroup>
                  <ToolGroup $nudge>
                    <Tool $w={55}>
                      <CodeIcon />
                    </Tool>
                  </ToolGroup>
                  <FormPick>
                    <Tool $w={119}>
                      <ToolText>양식 선택</ToolText>
                    </Tool>
                  </FormPick>
                </Toolbar>
                <EditorText>
                  <EditorLine>
                    안녕하세요,
                    <Mention>
                      <Mosaic cols="17px 17px 17px 10px" rows="17px 7px" cells="98a3ac a9b4bd a4aeb7 9aa6af a7b2bb d2dfea a2adb6 adb9c3" />
                    </Mention>
                    님!
                  </EditorLine>
                  <EditorLine $inset={4}>세일즈인사이트 박지민 대리입니다</EditorLine>
                </EditorText>
              </Editor>
            </FormColumn>
            <ScrollTrack>
              <ScrollArrow />
              <ScrollThumb />
              <ScrollArrow down />
            </ScrollTrack>
          </FormScroll>
          <WindowFooter $line>
            <FooterButton $muted>취소</FooterButton>
            <FooterButton>계획등록</FooterButton>
            <FooterButton>실적등록</FooterButton>
          </WindowFooter>
        </Window>
      </Windows>

      <Highlight $x={1092} $y={401} $w={180} $h={85} />
      <Highlight $x={1351} $y={146} $w={1091} $h={129} />
      <Highlight $x={1352} $y={603} $w={1092} $h={356} />
      <StepBadge>3</StepBadge>
      <ArrowLayer width="100" height="325" viewBox="0 0 100 325">
        <path d="M71 46L17.500 164L78 286" fill="none" stroke={LIME} strokeWidth="6" strokeLinejoin="round" />
        <path d="M83 16L58.500 39.500L82 50z" fill={LIME} />
        <path d="M91 312L65.500 291L89 279z" fill={LIME} />
      </ArrowLayer>
    </Page>
  );
}
